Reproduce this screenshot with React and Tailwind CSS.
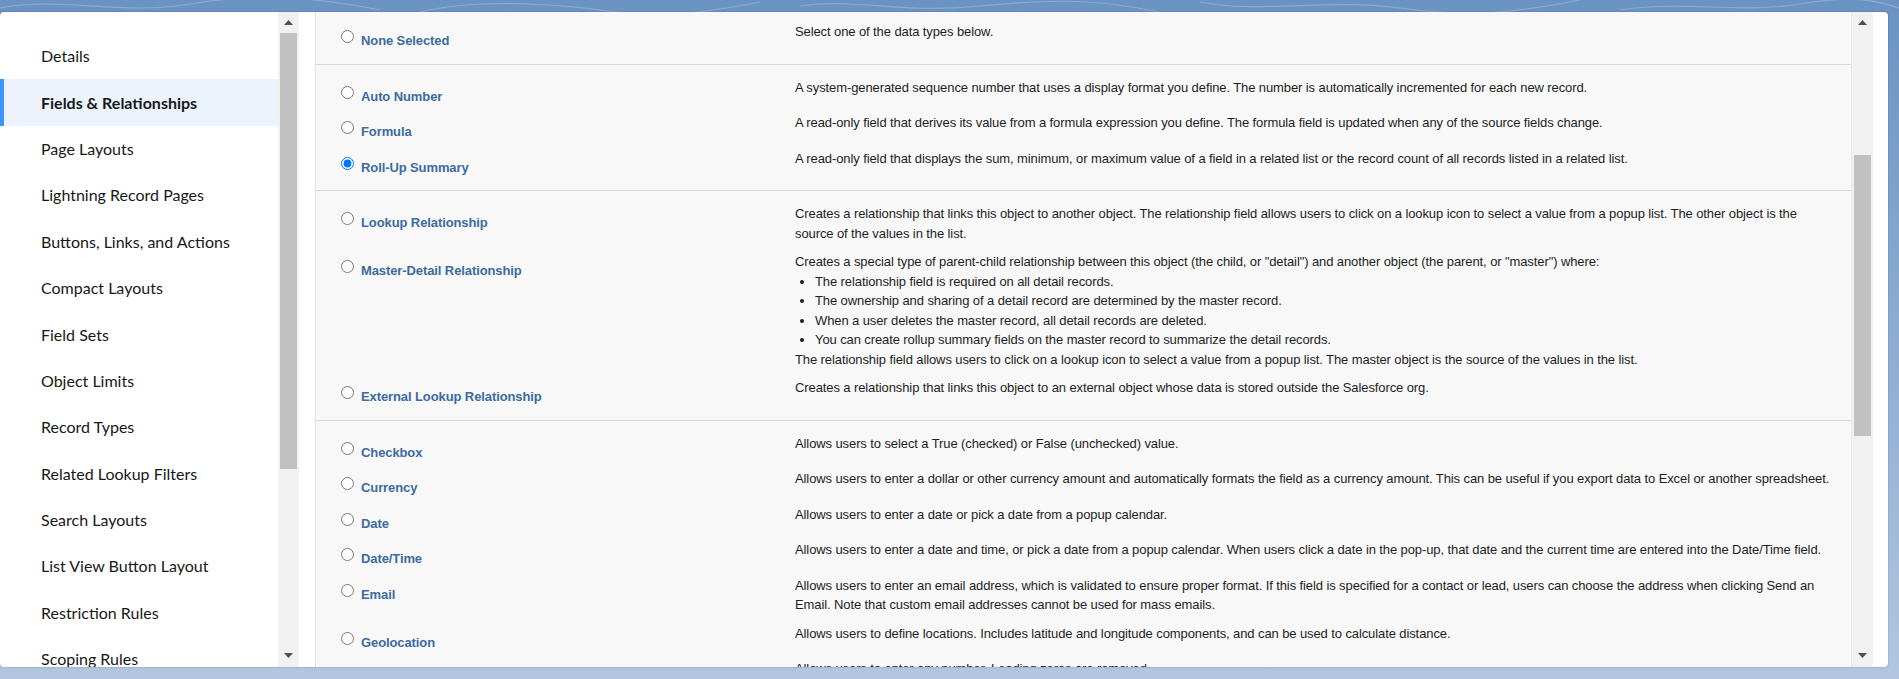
import React from 'react';

const navItems = [
  'Details',
  'Fields & Relationships',
  'Page Layouts',
  'Lightning Record Pages',
  'Buttons, Links, and Actions',
  'Compact Layouts',
  'Field Sets',
  'Object Limits',
  'Record Types',
  'Related Lookup Filters',
  'Search Layouts',
  'List View Button Layout',
  'Restriction Rules',
  'Scoping Rules',
  'Object Access',
  'Triggers',
];

const sections = [
  [{ label: 'None Selected', desc: 'Select one of the data types below.' }],
  [
    {
      label: 'Auto Number',
      desc: 'A system-generated sequence number that uses a display format you define. The number is automatically incremented for each new record.',
    },
    {
      label: 'Formula',
      desc: 'A read-only field that derives its value from a formula expression you define. The formula field is updated when any of the source fields change.',
    },
    {
      label: 'Roll-Up Summary',
      checked: true,
      desc: 'A read-only field that displays the sum, minimum, or maximum value of a field in a related list or the record count of all records listed in a related list.',
    },
  ],
  [
    {
      label: 'Lookup Relationship',
      desc: 'Creates a relationship that links this object to another object. The relationship field allows users to click on a lookup icon to select a value from a popup list. The other object is the source of the values in the list.',
    },
    { label: 'Master-Detail Relationship', masterDetail: true },
    {
      label: 'External Lookup Relationship',
      desc: 'Creates a relationship that links this object to an external object whose data is stored outside the Salesforce org.',
    },
  ],
  [
    { label: 'Checkbox', desc: 'Allows users to select a True (checked) or False (unchecked) value.' },
    {
      label: 'Currency',
      desc: 'Allows users to enter a dollar or other currency amount and automatically formats the field as a currency amount. This can be useful if you export data to Excel or another spreadsheet.',
    },
    { label: 'Date', desc: 'Allows users to enter a date or pick a date from a popup calendar.' },
    {
      label: 'Date/Time',
      desc: 'Allows users to enter a date and time, or pick a date from a popup calendar. When users click a date in the pop-up, that date and the current time are entered into the Date/Time field.',
    },
    {
      label: 'Email',
      desc: 'Allows users to enter an email address, which is validated to ensure proper format. If this field is specified for a contact or lead, users can choose the address when clicking Send an Email. Note that custom email addresses cannot be used for mass emails.',
    },
    {
      label: 'Geolocation',
      desc: 'Allows users to define locations. Includes latitude and longitude components, and can be used to calculate distance.',
    },
    { label: 'Number', desc: 'Allows users to enter any number. Leading zeros are removed.' },
  ],
];

const masterBullets = [
  'The relationship field is required on all detail records.',
  'The ownership and sharing of a detail record are determined by the master record.',
  'When a user deletes the master record, all detail records are deleted.',
  'You can create rollup summary fields on the master record to summarize the detail records.',
];

function ArrowUp() {
  return (
    <svg width="9" height="5" viewBox="0 0 9 5">
      <polygon points="0,5 9,5 4.5,0" fill="#505050" />
    </svg>
  );
}

function ArrowDown() {
  return (
    <svg width="9" height="5" viewBox="0 0 9 5">
      <polygon points="0,0 9,0 4.5,5" fill="#505050" />
    </svg>
  );
}

function TypeRow({ row }) {
  return (
    <div className="flex pb-[9px]">
      <div className="flex h-[26.5px] w-[479px] shrink-0 items-start pl-[25px]">
        <input
          type="radio"
          name="datatype"
          defaultChecked={!!row.checked}
          className="mt-[8px] mr-[7px] mb-0 ml-0 h-[13px] w-[13px] shrink-0"
        />
        <label className="mt-[11px] text-[13px] leading-[15px] font-bold tracking-[-0.1px] text-[#3d6b9f]">
          {row.label}
        </label>
      </div>
      <div className="min-w-0 flex-1 pr-[16px] text-[13px] leading-[19.5px] tracking-[-0.1px] text-[#1e1e1e]">
        {row.masterDetail ? (
          <>
            <div>
              Creates a special type of parent-child relationship between this object (the child, or "detail") and
              another object (the parent, or "master") where:
            </div>
            <ul className="m-0 list-disc pl-[20px]">
              {masterBullets.map((b) => (
                <li key={b}>{b}</li>
              ))}
            </ul>
            <div>
              The relationship field allows users to click on a lookup icon to select a value from a popup list. The
              master object is the source of the values in the list.
            </div>
          </>
        ) : (
          row.desc
        )}
      </div>
    </div>
  );
}

export default function App() {
  return (
    <div className="relative h-[679px] w-[1899px] overflow-hidden bg-linear-to-b from-[#6a93c3] to-[#b2c6e0] pt-[12px] pr-[11px] pb-[12px]">
      <svg className="absolute top-0 left-0" width="1899" height="12" viewBox="0 0 1899 12">
        <g fill="none" stroke="rgba(255,255,255,0.22)" strokeWidth="1.2">
          <path d="M0 8 C60 -4 120 16 190 4 S320 -2 380 10" />
          <path d="M420 12 C470 0 540 2 600 10 S700 14 760 2" />
          <path d="M800 6 C860 -2 900 14 980 6 S1100 0 1160 12" />
          <path d="M1200 2 C1260 14 1330 -2 1400 8 S1520 12 1580 0" />
          <path d="M1620 10 C1680 0 1740 14 1800 4 S1880 2 1899 8" />
        </g>
      </svg>
      <div className="relative flex h-full overflow-hidden rounded-[4px] bg-white shadow-[0_0_2px_rgba(0,0,0,0.25)]">
        <nav className="w-[278px] shrink-0 overflow-hidden pt-[21px] font-['Lato','Noto_Sans',sans-serif] text-[16px] text-[#181818]">
          {navItems.map((item) => {
            const active = item === 'Fields & Relationships';
            return (
              <div
                key={item}
                className={`flex h-[46.4px] items-center border-l-4 pl-[37px] ${
                  active ? 'border-[#3d95f7] bg-[#ecf3fd] font-bold' : 'border-transparent'
                }`}
              >
                {item}
              </div>
            );
          })}
        </nav>
        <div className="flex w-[21px] shrink-0 flex-col bg-[#f1f1f1]">
          <div className="flex h-[21px] items-center justify-center">
            <ArrowUp />
          </div>
          <div className="mx-[2px] h-[436px] bg-[#c1c1c1]" />
          <div className="flex-1" />
          <div className="flex h-[24px] items-center justify-center">
            <ArrowDown />
          </div>
        </div>
        <div className="w-[16px] shrink-0" />
        <div className="min-w-0 flex-1 overflow-hidden border-l border-[#e3e3e3] bg-[#f8f8f8] font-['Liberation_Sans',Arial,sans-serif]">
          {sections.map((rows, i) => (
            <div
              key={i}
              className={`pb-[6px] ${i === 0 ? 'pt-[10px]' : 'pt-[13px]'} ${
                i < sections.length - 1 ? 'border-b border-[#d9d9d9]' : ''
              }`}
            >
              {rows.map((row) => (
                <TypeRow key={row.label} row={row} />
              ))}
            </div>
          ))}
        </div>
        <div className="flex w-[22px] shrink-0 flex-col border-l border-[#e8e8e8] bg-[#f1f1f1]">
          <div className="flex h-[21px] items-center justify-center">
            <ArrowUp />
          </div>
          <div className="h-[122px]" />
          <div className="ml-[2px] h-[281px] w-[17px] bg-[#c1c1c1]" />
          <div className="flex-1" />
          <div className="flex h-[24px] items-center justify-center">
            <ArrowDown />
          </div>
        </div>
        <div className="w-[15px] shrink-0" />
      </div>
    </div>
  );
}
